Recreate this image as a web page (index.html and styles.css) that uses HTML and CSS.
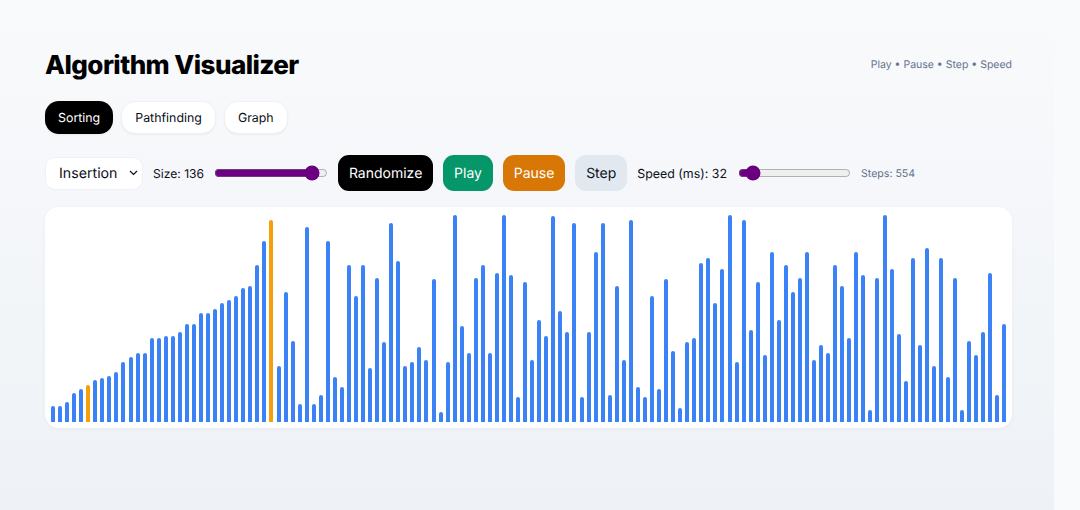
FILE: index.html
```html
<!DOCTYPE html>
<html lang="en">
<head>
<meta charset="utf-8">
<title>Algorithm Visualizer</title>
<link rel="stylesheet" href="styles.css">
</head>
<body>
<main class="app">
  <header class="header">
    <h1 class="title">Algorithm Visualizer</h1>
    <p class="hint">Play • Pause • Step • Speed</p>
  </header>
  <nav class="tabs">
    <button class="tab tab-active">Sorting</button>
    <button class="tab">Pathfinding</button>
    <button class="tab">Graph</button>
  </nav>
  <section class="controls">
    <select class="algo"><option>Insertion</option><option>Bubble</option><option>Merge</option></select>
    <label class="label">Size: 136</label>
    <input class="range range-size" type="range" min="10" max="147" value="136">
    <button class="btn btn-black">Randomize</button>
    <button class="btn btn-green">Play</button>
    <button class="btn btn-orange">Pause</button>
    <button class="btn btn-light">Step</button>
    <label class="label label-speed">Speed (ms): 32</label>
    <input class="range range-speed" type="range" min="10" max="300" value="32">
    <span class="steps">Steps: 554</span>
  </section>
  <section class="chart">
    <div class="bar" style="height:16.3px"></div><div class="bar" style="height:16.3px"></div><div class="bar" style="height:20.3px"></div><div class="bar" style="height:28.7px"></div><div class="bar" style="height:33.3px"></div><div class="bar bar-hot" style="height:37.3px"></div><div class="bar" style="height:41.7px"></div><div class="bar" style="height:44px"></div><div class="bar" style="height:45.7px"></div><div class="bar" style="height:50px"></div>
    <div class="bar" style="height:60.3px"></div><div class="bar" style="height:65px"></div><div class="bar" style="height:69px"></div><div class="bar" style="height:69px"></div><div class="bar" style="height:83.7px"></div><div class="bar" style="height:83.7px"></div><div class="bar" style="height:86px"></div><div class="bar" style="height:86px"></div><div class="bar" style="height:90px"></div><div class="bar" style="height:98.3px"></div>
    <div class="bar" style="height:98.3px"></div><div class="bar" style="height:108.7px"></div><div class="bar" style="height:108.7px"></div><div class="bar" style="height:113px"></div><div class="bar" style="height:119.3px"></div><div class="bar" style="height:121.7px"></div><div class="bar" style="height:125.7px"></div><div class="bar" style="height:134px"></div><div class="bar" style="height:136.3px"></div><div class="bar" style="height:157.3px"></div>
    <div class="bar" style="height:180.7px"></div><div class="bar bar-hot" style="height:201.7px"></div><div class="bar" style="height:56px"></div><div class="bar" style="height:130px"></div><div class="bar" style="height:81.3px"></div><div class="bar" style="height:18px"></div><div class="bar" style="height:195px"></div><div class="bar" style="height:18px"></div><div class="bar" style="height:27px"></div><div class="bar" style="height:180.7px"></div>
    <div class="bar" style="height:45.3px"></div><div class="bar" style="height:35px"></div><div class="bar" style="height:157.3px"></div><div class="bar" style="height:126px"></div><div class="bar" style="height:157.3px"></div><div class="bar" style="height:54.3px"></div><div class="bar" style="height:144.3px"></div><div class="bar" style="height:79.7px"></div><div class="bar" style="height:199.3px"></div><div class="bar" style="height:161.3px"></div>
    <div class="bar" style="height:56px"></div><div class="bar" style="height:60.3px"></div><div class="bar" style="height:75.3px"></div><div class="bar" style="height:62.3px"></div><div class="bar" style="height:142.7px"></div><div class="bar" style="height:10px"></div><div class="bar" style="height:60.3px"></div><div class="bar" style="height:207.3px"></div><div class="bar" style="height:96.3px"></div><div class="bar" style="height:69px"></div>
    <div class="bar" style="height:144.3px"></div><div class="bar" style="height:157.3px"></div><div class="bar" style="height:69px"></div><div class="bar" style="height:149px"></div><div class="bar" style="height:207.3px"></div><div class="bar" style="height:146.7px"></div><div class="bar" style="height:24.7px"></div><div class="bar" style="height:140.3px"></div><div class="bar" style="height:62.3px"></div><div class="bar" style="height:102.3px"></div>
    <div class="bar" style="height:86px"></div><div class="bar" style="height:205.7px"></div><div class="bar" style="height:111px"></div><div class="bar" style="height:90px"></div><div class="bar" style="height:199.3px"></div><div class="bar" style="height:24.7px"></div><div class="bar" style="height:90px"></div><div class="bar" style="height:170px"></div><div class="bar" style="height:199.3px"></div><div class="bar" style="height:26.7px"></div>
    <div class="bar" style="height:136.3px"></div><div class="bar" style="height:62.3px"></div><div class="bar" style="height:201.7px"></div><div class="bar" style="height:35px"></div><div class="bar" style="height:24.7px"></div><div class="bar" style="height:125.7px"></div><div class="bar" style="height:33.3px"></div><div class="bar" style="height:142.7px"></div><div class="bar" style="height:71px"></div><div class="bar" style="height:14px"></div>
    <div class="bar" style="height:79.7px"></div><div class="bar" style="height:83.7px"></div><div class="bar" style="height:159.3px"></div><div class="bar" style="height:163.7px"></div><div class="bar" style="height:119.3px"></div><div class="bar" style="height:153px"></div><div class="bar" style="height:207.3px"></div><div class="bar" style="height:60.3px"></div><div class="bar" style="height:201.7px"></div><div class="bar" style="height:91.7px"></div>
    <div class="bar" style="height:140.3px"></div><div class="bar" style="height:66.7px"></div><div class="bar" style="height:170px"></div><div class="bar" style="height:102.3px"></div><div class="bar" style="height:157.3px"></div><div class="bar" style="height:130px"></div><div class="bar" style="height:144.3px"></div><div class="bar" style="height:170px"></div><div class="bar" style="height:62.3px"></div><div class="bar" style="height:77.3px"></div>
    <div class="bar" style="height:69px"></div><div class="bar" style="height:157.3px"></div><div class="bar" style="height:136.3px"></div><div class="bar" style="height:83.7px"></div><div class="bar" style="height:170px"></div><div class="bar" style="height:146.7px"></div><div class="bar" style="height:12.3px"></div><div class="bar" style="height:144.3px"></div><div class="bar" style="height:207.3px"></div><div class="bar" style="height:153px"></div>
    <div class="bar" style="height:87.7px"></div><div class="bar" style="height:41.3px"></div><div class="bar" style="height:163.7px"></div><div class="bar" style="height:77.3px"></div><div class="bar" style="height:174px"></div><div class="bar" style="height:56px"></div><div class="bar" style="height:163.7px"></div><div class="bar" style="height:45.3px"></div><div class="bar" style="height:144.3px"></div><div class="bar" style="height:12.3px"></div>
    <div class="bar" style="height:81.3px"></div><div class="bar" style="height:66.7px"></div><div class="bar" style="height:90px"></div><div class="bar" style="height:149px"></div><div class="bar" style="height:27px"></div><div class="bar" style="height:98.3px"></div>
  </section>
</main>
</body>
</html>
```
FILE: styles.css
```css
* { box-sizing: border-box; text-rendering: geometricPrecision; }
html, body { margin: 0; height: 100%; }
body {
  background: #f9fafc;
  font-family: Inter, "Liberation Sans", sans-serif;
  color: #0b0f19;
  overflow: hidden;
}
.app {
  width: 1054px;
  height: 510px;
  padding: 45px 42px 0 45px;
  background: linear-gradient(180deg, #f9fafc 0%, #eef2f6 100%);
}
.header {
  display: flex;
  justify-content: space-between;
  align-items: center;
  height: 40px;
}
.title {
  margin: 0;
  font-size: 26px;
  font-weight: 800;
  letter-spacing: -0.55px;
  color: #000;
}
.hint {
  margin: 0 0 2px;
  font-size: 10.5px;
  color: #64748b;
}
.tabs {
  display: flex;
  gap: 8px;
  margin-top: 16px;
}
.tab {
  height: 33px;
  padding: 0 13px;
  border: 1px solid #eef1f5;
  border-radius: 14px;
  background: #fff;
  color: #0b0f19;
  font: 400 12.4px Inter, sans-serif;
  box-shadow: 0 1px 2px rgba(15, 23, 42, 0.05);
}
.tab-active {
  background: #000;
  border: 0;
  color: #fff;
}
.controls {
  display: flex;
  align-items: center;
  gap: 10px;
  margin-top: 21px;
  height: 36px;
}
.algo {
  appearance: none;
  width: 98px;
  height: 33px;
  padding: 0 22px 0 13px;
  border: 1px solid #eef1f5;
  border-radius: 10px;
  background: #fff url("data:image/svg+xml,%3Csvg xmlns='http://www.w3.org/2000/svg' width='9' height='6' viewBox='0 0 9 6'%3E%3Cpath d='M1 1l3.5 3.5L8 1' fill='none' stroke='%230b0f19' stroke-width='1.2'/%3E%3C/svg%3E") no-repeat right 4px center;
  color: #0b0f19;
  font: 400 14.2px Inter, sans-serif;
}
.label {
  font-size: 12.1px;
  color: #0b0f19;
}
.label-speed { font-size: 12.4px; }
.range {
  margin: 0;
  height: 16px;
  accent-color: #6a0080;
}
.range-size { width: 114px; }
.range-speed { width: 113px; margin-left: 1px; }
.btn {
  height: 36px;
  padding: 0 10.9px;
  border: 0;
  border-radius: 11px;
  font: 400 14px Inter, sans-serif;
}
.btn-black { background: #000; color: #fff; }
.btn-green { background: #059669; color: #fff; }
.btn-orange { background: #d97706; color: #fff; }
.btn-light { background: #e2e8f0; color: #0b0f19; }
.steps {
  font-size: 10.6px;
  color: #64748b;
}
.chart {
  display: flex;
  align-items: flex-end;
  gap: 3.047px;
  height: 221px;
  margin-top: 16px;
  padding: 6px;
  background: #fff;
  border-radius: 14px;
  box-shadow: 0 1px 4px rgba(15, 23, 42, 0.04);
}
.bar {
  flex: 0 0 4px;
  background: #3b82f6;
  border-radius: 2px 2px 0 0;
}
.bar-hot { background: #f99e0b; }
```
